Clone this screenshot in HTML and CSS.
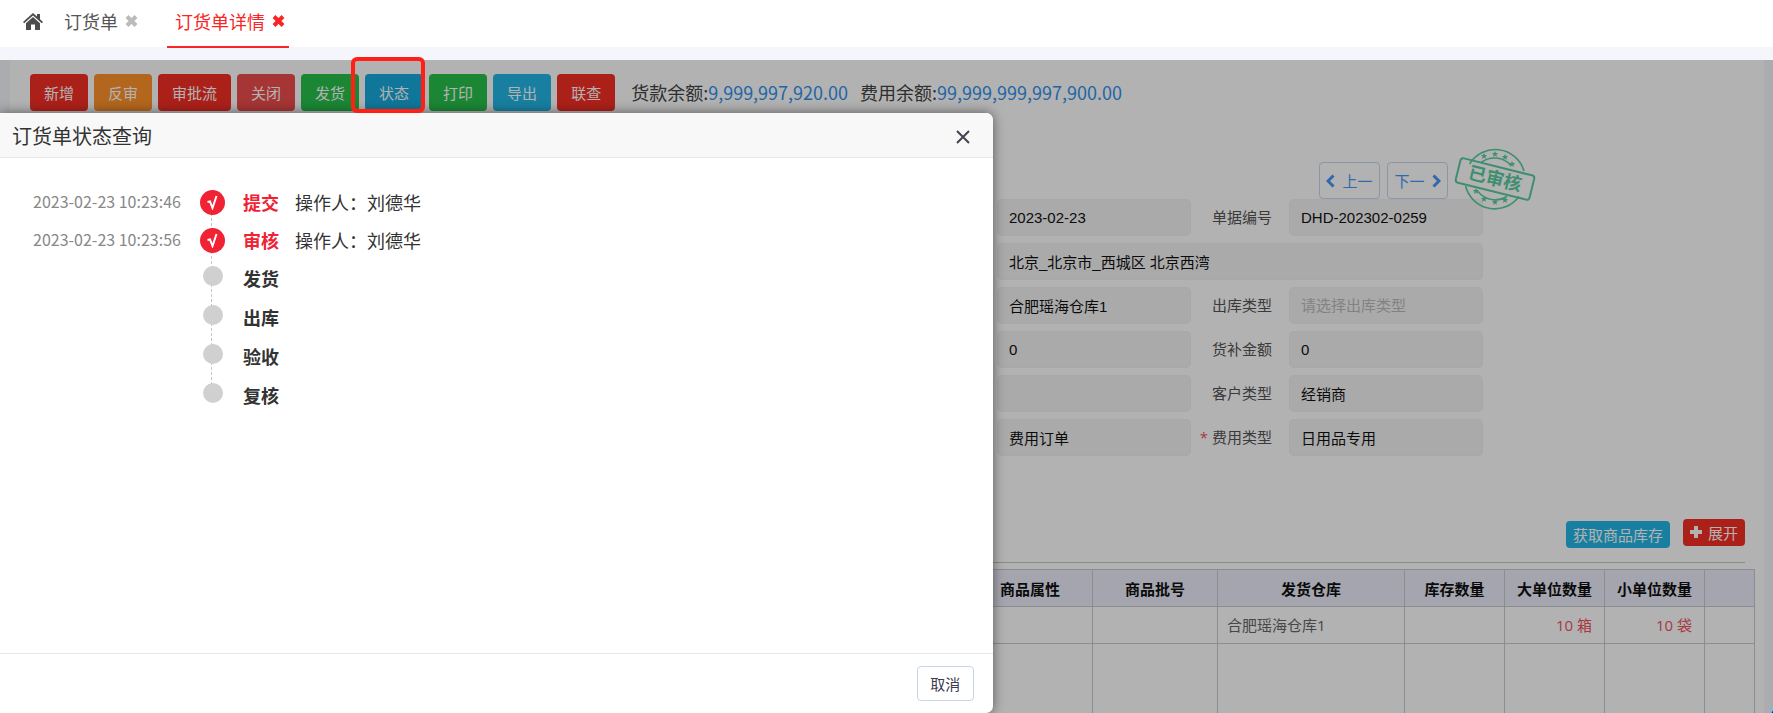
FILE: index.html
```html
<!DOCTYPE html>
<html lang="zh-CN">
<head>
  <meta charset="UTF-8" />
  <meta name="viewport" content="width=device-width, initial-scale=1.0"/>
  <title>订货单详情</title>
  <link rel="stylesheet" href="styles.css">
</head>
<body>
  <nav class="tabs">
    <a href="#" class="home" aria-label="首页">
      <svg width="20" height="17" viewBox="0 0 20 17">
        <path d="M10 0 L14 3.6 V1 H17 V6.3 L20 9 L18.8 10.3 L10 2.4 L1.2 10.3 L0 9 Z"/>
        <path d="M10 4 L17 10.2 V17 H12 V11.5 H8 V17 H3 V10.2 Z"/>
      </svg>
    </a>
    <a href="#" class="tab">订货单
      <svg class="tab-close" width="13" height="12" viewBox="0 0 13 12"><path d="M2 1.5 L11 10.5 M11 1.5 L2 10.5"/></svg>
    </a>
    <a href="#" class="tab active">订货单详情
      <svg class="tab-close" width="13" height="12" viewBox="0 0 13 12"><path d="M2 1.5 L11 10.5 M11 1.5 L2 10.5"/></svg>
    </a>
  </nav>

  <main class="page">
    <div class="toolbar">
      <button class="btn red">新增</button>
      <button class="btn orange">反审</button>
      <button class="btn red">审批流</button>
      <button class="btn pink">关闭</button>
      <button class="btn green">发货</button>
      <button class="btn blue focus">状态</button>
      <button class="btn green">打印</button>
      <button class="btn blue">导出</button>
      <button class="btn red">联查</button>
      <div class="balance">
        <span>货款余额:<b>9,999,997,920.00</b></span>
        <span>费用余额:<b>99,999,999,997,900.00</b></span>
      </div>
    </div>

    <div class="order">
      <div class="pager">
        <button class="page-btn">
          <svg width="9" height="14" viewBox="0 0 9 14"><path d="M7.5 1.5 L2 7 L7.5 12.5"/></svg>
          上一
        </button>
        <button class="page-btn">
          下一
          <svg width="9" height="14" viewBox="0 0 9 14"><path d="M1.5 1.5 L7 7 L1.5 12.5"/></svg>
        </button>
        <svg class="stamp" width="84" height="64" viewBox="0 0 84 64">
          <g fill="none" stroke="#5acca0" stroke-width="1.6">
            <path d="M16.6 17 A30 30 0 0 1 71 24"/>
            <path d="M12.6 39 A30 30 0 0 0 66 49.5"/>
            <path d="M28 15.5 A22 22 0 0 1 58 18.5"/>
            <path d="M25 44.5 A22 22 0 0 0 54 49.5"/>
            <rect x="4" y="19.5" width="76" height="25" rx="3" transform="rotate(14 42 32)" stroke-width="2"/>
          </g>
          <g fill="#5acca0">
            <path id="star" d="M42 4 l.9 2.1 2.2.2 -1.7 1.4 .6 2.2 -2 -1.3 -2 1.3 .6 -2.2 -1.7 -1.4 2.2 -.2z"/>
            <use href="#star" x="10" y="3"/>
            <use href="#star" x="17" y="10"/>
            <use href="#star" x="-11" y="2"/>
            <use href="#star" x="-19" y="37"/>
            <use href="#star" x="-11" y="45"/>
            <use href="#star" x="0" y="48"/>
            <use href="#star" x="10" y="46"/>
          </g>
          <text class="stamp-text" x="42" y="38" transform="rotate(14 42 32)">已审核</text>
        </svg>
      </div>

      <form class="form">
        <input class="f-left" type="text" value="2023-02-23" aria-label="单据日期" readonly />
        <label for="bill_no">单据编号</label>
        <input type="text" id="bill_no" value="DHD-202302-0259" readonly />

        <input class="f-wide" type="text" value="北京_北京市_西城区 北京西湾" aria-label="收货地址" readonly />

        <input class="f-left" type="text" value="合肥瑶海仓库1" aria-label="发货仓库" readonly />
        <label for="out_type">出库类型</label>
        <input type="text" id="out_type" placeholder="请选择出库类型" readonly />

        <input class="f-left" type="text" value="0" aria-label="金额" readonly />
        <label for="goods_amount">货补金额</label>
        <input type="text" id="goods_amount" value="0" readonly />

        <input class="f-left" type="text" value="" aria-label="备注" readonly />
        <label for="customer_type">客户类型</label>
        <input type="text" id="customer_type" value="经销商" readonly />

        <input class="f-left" type="text" value="费用订单" aria-label="订单类型" readonly />
        <label for="fee_type"><i>*</i> 费用类型</label>
        <input type="text" id="fee_type" value="日用品专用" readonly />
      </form>
    </div>

    <div class="actions">
      <button class="btn-sm blue">获取商品库存</button>
      <button class="btn-sm red expand">
        <svg width="12" height="12" viewBox="0 0 12 12"><path d="M6 0 V12 M0 6 H12"/></svg>
        展开
      </button>
    </div>

    <table class="goods">
      <colgroup>
        <col />
        <col class="w125" />
        <col class="w125" />
        <col class="w187" />
        <col class="w100" />
        <col class="w100" />
        <col class="w100" />
        <col class="w50" />
      </colgroup>
      <thead>
        <tr>
          <th></th>
          <th>商品属性</th>
          <th>商品批号</th>
          <th>发货仓库</th>
          <th>库存数量</th>
          <th>大单位数量</th>
          <th>小单位数量</th>
          <th></th>
        </tr>
      </thead>
      <tbody>
        <tr>
          <td></td>
          <td></td>
          <td></td>
          <td>合肥瑶海仓库1</td>
          <td></td>
          <td class="num">10 箱</td>
          <td class="num">10 袋</td>
          <td></td>
        </tr>
        <tr class="blank">
          <td></td><td></td><td></td><td></td><td></td><td></td><td></td><td></td>
        </tr>
      </tbody>
    </table>
  </main>

  <div class="helper"></div>
  <div class="shade"></div>
  <div class="mark"></div>

  <div class="dialog" role="dialog" aria-labelledby="dialog-title">
    <div class="dialog-head">
      <h2 id="dialog-title">订货单状态查询</h2>
      <button class="dialog-close" aria-label="关闭">
        <svg width="14" height="14" viewBox="0 0 14 14"><path d="M1 1 L13 13 M13 1 L1 13"/></svg>
      </button>
    </div>
    <ul class="steps">
      <li class="done">
        <time>2023-02-23 10:23:46</time>
        <span class="dot">
          <svg width="11" height="15" viewBox="0 0 11 15"><path d="M0.5 7 L3 6.5 L5.5 13 L9.5 1"/></svg>
        </span>
        <strong>提交</strong>
        <span>操作人：刘德华</span>
      </li>
      <li class="done">
        <time>2023-02-23 10:23:56</time>
        <span class="dot">
          <svg width="11" height="15" viewBox="0 0 11 15"><path d="M0.5 7 L3 6.5 L5.5 13 L9.5 1"/></svg>
        </span>
        <strong>审核</strong>
        <span>操作人：刘德华</span>
      </li>
      <li><time></time><span class="dot"></span><strong>发货</strong></li>
      <li><time></time><span class="dot"></span><strong>出库</strong></li>
      <li><time></time><span class="dot"></span><strong>验收</strong></li>
      <li><time></time><span class="dot"></span><strong>复核</strong></li>
    </ul>
    <div class="dialog-foot">
      <button class="cancel">取消</button>
    </div>
  </div>
</body>
</html>
```

FILE: styles.css
```css
* {
  box-sizing: border-box;
}

body {
  margin: 0;
  height: 100vh;
  display: flex;
  flex-direction: column;
  overflow: hidden;
  position: relative;
  background: #f5f6fb;
  color: #333;
  font-family: "Open Sans", "Noto Sans CJK SC", sans-serif;
  font-size: 15px;
}

button, input {
  font-family: inherit;
  font-size: 15px;
}

button {
  cursor: pointer;
}

/* tabs */
.tabs {
  display: flex;
  align-items: center;
  flex: none;
  height: 47px;
  padding-left: 23px;
  background: #fff;
}

.home {
  display: flex;
  margin: 0 21px 4px 0;
  fill: #4c4c4c;
}

.tab {
  display: flex;
  align-items: center;
  gap: 7px;
  height: 48px;
  padding-bottom: 6px;
  margin-right: 29px;
  color: #555;
  font-size: 18px;
  text-decoration: none;
}

.tab-close {
  fill: none;
  stroke: #bbb;
  stroke-width: 4;
}

.tab.active {
  padding: 0 4px 4px 8px;
  margin: 1px 0 0;
  color: #f92424;
  border-bottom: 2px solid #f92424;
}

.tab.active .tab-close {
  stroke: #f92424;
}

/* page */
.page {
  display: flex;
  flex-direction: column;
  flex: 1;
  min-height: 0;
  margin: 13px 9px 0 10px;
  padding-top: 14px;
  background: #fff;
}

.toolbar {
  display: flex;
  flex: none;
  gap: 6px;
  padding-left: 20px;
}

.btn {
  height: 37px;
  padding: 0 14px 1px;
  border: none;
  border-radius: 4px;
  color: #fff;
}

.red { background: #f72f26; }
.orange { background: #ff932b; }
.pink { background: #ee4d4c; }
.green { background: #28c24c; }
.blue { background: #23b7e5; }
.blue.focus { background: #17aadd; }

.balance {
  display: flex;
  align-items: center;
  gap: 12px;
  margin-left: 10px;
  padding-bottom: 2px;
  color: #444;
  font-family: "Noto Sans CJK SC", sans-serif;
  font-size: 18px;
}

.balance b {
  font-weight: normal;
  color: #2f92f0;
}

.order {
  flex: none;
  width: 1473px;
  padding-top: 51px;
}

.pager {
  display: flex;
  justify-content: flex-end;
  gap: 7px;
  position: relative;
  padding-right: 35px;
}

.page-btn {
  display: flex;
  align-items: center;
  justify-content: center;
  gap: 7px;
  width: 61px;
  height: 37px;
  padding: 0;
  border: 1px solid #c5d8f0;
  border-radius: 4px;
  background: #fff;
  color: #4696fc;
}

.page-btn svg {
  fill: none;
  stroke: #4696fc;
  stroke-width: 3;
}

.stamp {
  position: absolute;
  right: -54px;
  top: -15px;
  z-index: 1;
}

.stamp-text {
  fill: #5acca0;
  font-family: "Noto Sans CJK SC", sans-serif;
  font-size: 18px;
  font-weight: 700;
  text-anchor: middle;
}

.form {
  display: grid;
  grid-template-columns: 194px 98px 194px;
  justify-content: end;
  gap: 7px 0;
}

.form label {
  padding-right: 17px;
  line-height: 37px;
  text-align: right;
  color: #555;
}

.form label i {
  color: #f0545e;
  font-style: normal;
}

.form input {
  width: 100%;
  height: 37px;
  padding: 0 11px;
  border: 1px solid #f1f1f1;
  border-radius: 5px;
  background: #f4f4f4;
  color: #111;
  font-family: "Liberation Sans", "Noto Sans CJK SC", sans-serif;
}

.form input::placeholder {
  color: #bbb;
}

.form .f-wide {
  grid-column: 1 / -1;
}

.actions {
  display: flex;
  flex: none;
  justify-content: flex-end;
  gap: 13px;
  height: 44px;
  margin: 63px 19px 6px 10px;
  border-bottom: 1px solid #c8c8c8;
}

.btn-sm {
  height: 27px;
  margin-top: 2px;
  padding: 0 7px 1px;
  border: none;
  border-radius: 4px;
  color: #fff;
}

.expand {
  display: flex;
  align-items: center;
  gap: 6px;
  margin-top: 0;
}

.expand svg {
  stroke: #fff;
  stroke-width: 4;
}

/* goods table */
.goods {
  flex: none;
  width: auto;
  margin: 0 9px 0 10px;
  border-collapse: collapse;
  table-layout: fixed;
}

.goods th, .goods td {
  height: 37px;
  padding: 0 12px 1px 9px;
  border: 1px solid #c9cacf;
}

.goods th {
  padding: 0;
  background: #ecedfb;
  color: #111;
}

.goods td {
  color: #666;
}

.goods .num {
  text-align: right;
  color: #f0545e;
}

.goods .blank td {
  height: 90px;
}

.goods .w50 { width: 50px; }
.goods .w100 { width: 100px; }
.goods .w125 { width: 125px; }
.goods .w187 { width: 187px; }

.helper {
  position: absolute;
  right: -16px;
  bottom: -13px;
  width: 20px;
  height: 20px;
  border: 2px solid #5cc3ff;
  border-radius: 50%;
  background: #17324d;
  z-index: 6;
}

.shade {
  position: absolute;
  inset: 60px 0 0 0;
  background: rgba(0, 0, 0, 0.3);
  z-index: 2;
}

/* frame round the status button */
.mark {
  position: absolute;
  left: 351px;
  top: 57px;
  width: 74px;
  height: 56px;
  border: 4px solid #ff1f14;
  border-radius: 6px;
  z-index: 5;
}

/* dialog */
.dialog {
  display: flex;
  flex-direction: column;
  position: absolute;
  top: 113px;
  left: 0;
  bottom: 0;
  width: 56%;
  border-radius: 0 7px 7px 0;
  background: #fff;
  box-shadow: 0 0 12px rgba(0, 0, 0, 0.5);
  z-index: 4;
}

.dialog-head {
  display: flex;
  align-items: center;
  justify-content: space-between;
  height: 45px;
  padding: 0 23px 0 12px;
  border-bottom: 1px solid #e6e6e6;
  border-radius: 0 7px 0 0;
  background: #f8f8f8;
}

.dialog-head h2 {
  margin: 0;
  font-size: 20px;
  font-weight: normal;
}

.dialog-close {
  display: flex;
  padding: 3px 0 0;
  border: none;
  background: none;
}

.dialog-close svg {
  stroke: #444450;
  stroke-width: 2;
}

.steps {
  flex: 1;
  margin: 0;
  padding: 25px 0 0 33px;
  list-style: none;
}

.steps li {
  display: grid;
  grid-template-columns: 167px 25px 52px 1fr;
  align-items: start;
  position: relative;
  height: 39px;
  font-size: 18px;
  line-height: 40px;
}

.steps li.done {
  height: 38px;
}

.steps time {
  color: #888;
  font-family: "Noto Sans CJK SC", sans-serif;
  font-size: 16px;
  line-height: 36px;
}

.steps strong {
  padding-left: 18px;
  white-space: nowrap;
}

.steps .done strong {
  color: #f02233;
}

.steps .done strong + span {
  padding-left: 18px;
}

.dot {
  display: flex;
  align-items: center;
  justify-content: center;
  justify-self: center;
  width: 20px;
  height: 20px;
  margin-top: 7px;
  border-radius: 50%;
  background: #d0d0d0;
  z-index: 1;
}

.done .dot {
  width: 25px;
  height: 25px;
  background: #f02233;
}

.dot svg {
  fill: none;
  stroke: #fff;
  stroke-width: 2;
}

/* dashed line to the next step */
.steps li:not(:last-child)::after {
  content: "";
  position: absolute;
  left: 178px;
  top: 20px;
  height: 38px;
  border-left: 1px dashed #c4c4c4;
}

.dialog-foot {
  display: flex;
  justify-content: flex-end;
  padding: 12px 19px;
  border-top: 1px solid #e6e6e6;
}

.cancel {
  width: 57px;
  height: 35px;
  padding: 0;
  border: 1px solid #c8d6e8;
  border-radius: 4px;
  background: #fff;
  color: #3c3c50;
}
```
